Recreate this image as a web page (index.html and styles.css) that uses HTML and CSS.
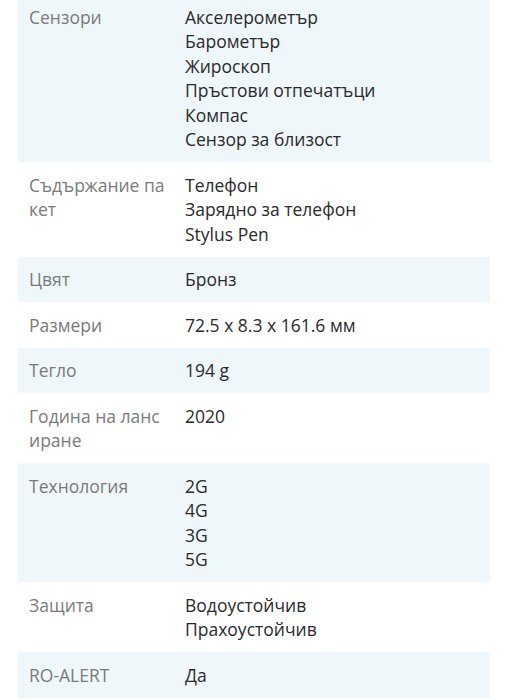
FILE: index.html
```html
<!DOCTYPE html>
<html lang="bg">
<head>
<meta charset="utf-8">
<link rel="stylesheet" href="styles.css">
</head>
<body>
<div class="specs">
  <div class="row shaded">
    <div class="label">Сензори</div>
    <div class="value">Акселерометър<br>Барометър<br>Жироскоп<br>Пръстови отпечатъци<br>Компас<br>Сензор за близост</div>
  </div>
  <div class="row">
    <div class="label">Съдържание пакет</div>
    <div class="value">Телефон<br>Зарядно за телефон<br>Stylus Pen</div>
  </div>
  <div class="row shaded">
    <div class="label">Цвят</div>
    <div class="value">Бронз</div>
  </div>
  <div class="row">
    <div class="label">Размери</div>
    <div class="value">72.5 x 8.3 x 161.6 мм</div>
  </div>
  <div class="row shaded">
    <div class="label">Тегло</div>
    <div class="value">194 g</div>
  </div>
  <div class="row">
    <div class="label">Година на лансиране</div>
    <div class="value">2020</div>
  </div>
  <div class="row shaded">
    <div class="label">Технология</div>
    <div class="value">2G<br>4G<br>3G<br>5G</div>
  </div>
  <div class="row">
    <div class="label">Защита</div>
    <div class="value">Водоустойчив<br>Прахоустойчив</div>
  </div>
  <div class="row shaded">
    <div class="label">RO-ALERT</div>
    <div class="value">Да</div>
  </div>
</div>
</body>
</html>
```
FILE: styles.css
```css
html, body {
  margin: 0;
  padding: 0;
  background: #ffffff;
}
body {
  font-family: "Open Sans", "Noto Sans", sans-serif;
  font-size: 17.5px;
  line-height: 24.5px;
  color: #333333;
}
.specs {
  margin: -6px 17px 0 18px;
  display: flex;
  flex-direction: column;
}
.row {
  display: grid;
  grid-template-columns: 136px 1fr;
  column-gap: 20px;
  padding: 10.5px 11px;
}
.shaded {
  background: #eff7fb;
}
.label {
  color: #7a7a7a;
  word-break: break-all;
}
.value {
  color: #2a2a2a;
}
```
